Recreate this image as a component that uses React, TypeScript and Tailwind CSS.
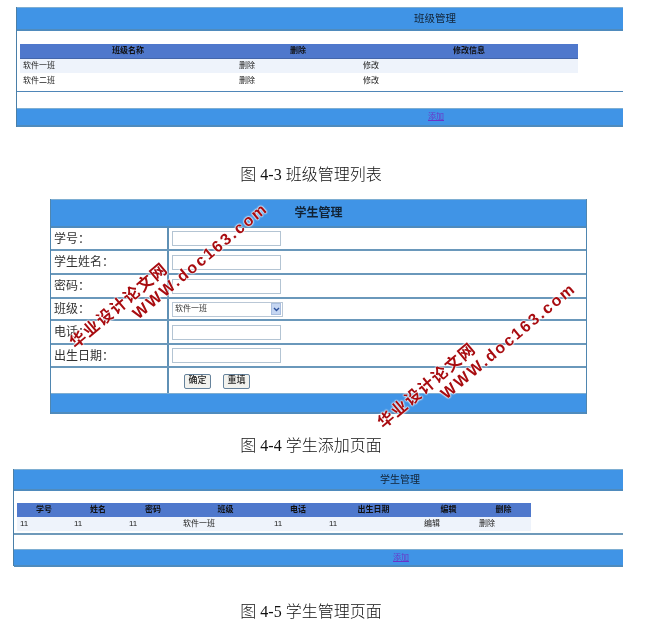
const cjk = "font-['Liberation_Sans','Noto_Sans_CJK_SC',sans-serif]";

function Caption({ children, className }: { children: React.ReactNode; className: string }) {
  return (
    <div className={`text-center text-[16px] leading-[20px] text-[#111] font-['Liberation_Serif','Noto_Sans_CJK_SC',serif] font-light ${className}`}>
      {children}
    </div>
  );
}

function Band({ className, children }: { className: string; children?: React.ReactNode }) {
  return (
    <div className={`flex items-center bg-[#4094e6] border-t border-t-[#7eaed2] border-b-2 border-b-[#4f8bbd] ${className}`}>
      {children}
    </div>
  );
}

function Mark({ cn, en, className }: { cn: string; en: string; className: string }) {
  return (
    <div className={`absolute origin-left -rotate-[40deg] flex flex-col items-start font-bold text-[#a80c10] font-['Liberation_Sans','Noto_Sans_CJK_SC',sans-serif] [text-shadow:0_0_2px_#fff,0_0_2px_#fff,0_0_2px_#fff] ${className}`}>
      <div className="text-[16px] leading-[18px] tracking-[1.5px] whitespace-nowrap">{cn}</div>
      <div className="text-[16px] leading-[18px] tracking-[2.1px] ml-[67px] whitespace-nowrap">{en}</div>
    </div>
  );
}

function FormRow({ label, h, last }: { label: string; h: string; last?: boolean }) {
  return (
    <div className={`flex ${h} ${last ? "" : "border-b-2 border-b-[#6a98bb]"}`}>
      <div className="w-[118px] shrink-0 border-r-2 border-r-[#5f90b5] pl-[3px] flex items-center text-[12px] text-[#333]">{label}</div>
      <div className="flex items-center pl-[3px]">
        {label === "班级：" ? (
          <div className="w-[111px] h-[15px] border border-[#b9c7d6] flex items-center justify-between pl-[2px] pr-[1px] text-[8px] text-[#333] bg-white">
            软件一班
            <span className="w-[10px] h-[12px] bg-[#c5d6f2] border border-[#a9bedf] flex items-center justify-center">
              <svg width="7" height="5" viewBox="0 0 7 5"><path d="M1 1l2.5 2.5L6 1" fill="none" stroke="#2a4f9a" strokeWidth="1.4" /></svg>
            </span>
          </div>
        ) : label !== "" ? (
          <div className="w-[109px] h-[15px] border border-[#b3c4d3] bg-white" />
        ) : (
          <div className="flex gap-[12px] pl-[12px] pt-[1px]">
            {["确定", "重填"].map((t) => (
              <div key={t} className="w-[27px] h-[15px] border border-[#66839c] rounded-[2px] bg-[#f2f2ee] text-[9px] font-medium text-[#222] flex items-center justify-center">{t}</div>
            ))}
          </div>
        )}
      </div>
    </div>
  );
}

export default function App() {
  return (
    <div className={`relative w-[647px] h-[634px] bg-white overflow-hidden blur-[0.3px] ${cjk}`}>
      {/* Table 1 */}
      <div className="pt-[7px] pl-[16px]">
        <div className="w-[607px] h-[120px] border-l border-l-[#4a7fa8] flex flex-col">
          <Band className="h-[24px] pl-[397px] text-[10.5px] text-[#123]">班级管理</Band>
          <div className="h-[61px] pt-[13px] pl-[3px] border-b border-b-[#4f86b8] shrink-0">
            <div className="w-[558px] text-[8px] text-[#222]">
              <div className="grid grid-cols-[216px_124px_1fr] h-[15px] items-center bg-[#4f78cc] font-bold text-[#111] text-center border-b border-b-[#46a]">
                <span>班级名称</span>
                <span>删除</span>
                <span>修改信息</span>
              </div>
              <div className="grid grid-cols-[216px_124px_1fr] h-[14px] items-center bg-[#eef3fb] pl-[3px]">
                <span>软件一班</span><span>删除</span><span>修改</span>
              </div>
              <div className="grid grid-cols-[216px_124px_1fr] h-[15px] items-center pl-[3px]">
                <span>软件二班</span><span>删除</span><span>修改</span>
              </div>
            </div>
          </div>
          <div className="h-[16px] shrink-0" />
          <Band className="h-[19px] pl-[411px] text-[8px]">
            <span className="underline text-[#6a35c8]">添加</span>
          </Band>
        </div>
      </div>

      <Caption className="w-[622px] mt-[38px]">图 4-3 班级管理列表</Caption>

      {/* Table 2 */}
      <div className="pl-[50px] mt-[14px]">
        <div className="w-[537px] h-[215px] border-x border-x-[#4f86b0] flex flex-col">
          <Band className="h-[29px] shrink-0 justify-center text-[12px] font-bold text-[#123]">学生管理</Band>
          <FormRow label="学号：" h="h-[23px]" />
          <FormRow label="学生姓名：" h="h-[24px]" />
          <FormRow label="密码：" h="h-[24px]" />
          <FormRow label="班级：" h="h-[22px]" />
          <FormRow label="电话：" h="h-[24px]" />
          <FormRow label="出生日期：" h="h-[23px]" />
          <FormRow label="" h="h-[25px]" last />
          <Band className="h-[21px] shrink-0" />
        </div>
      </div>

      <Caption className="w-[622px] mt-[22px]">图 4-4 学生添加页面</Caption>

      {/* Table 3 */}
      <div className="pl-[13px] mt-[13px]">
        <div className="w-[610px] h-[97px] border-l border-l-[#4a7fa8] flex flex-col">
          <Band className="h-[22px] shrink-0 pl-[366px] text-[10px] text-[#123]">学生管理</Band>
          <div className="h-[44px] shrink-0 pt-[12px] pl-[3px] border-b-2 border-b-[#6f9aba]">
            <div className="w-[514px] text-[8px] text-[#222]">
              <div className="grid grid-cols-[54px_54px_56px_89px_56px_95px_55px_1fr] h-[14px] items-center bg-[#4f78cc] font-bold text-[#111] text-center">
                <span>学号</span><span>姓名</span><span>密码</span><span>班级</span><span>电话</span><span>出生日期</span><span>编辑</span><span>删除</span>
              </div>
              <div className="grid grid-cols-[54px_55px_54px_91px_55px_95px_55px_1fr] h-[14px] items-center bg-[#eef3fb] pl-[3px]">
                <span>11</span><span>11</span><span>11</span><span>软件一班</span><span>11</span><span>11</span><span>编辑</span><span>删除</span>
              </div>
            </div>
          </div>
          <div className="h-[14px] shrink-0" />
          <Band className="h-[18px] shrink-0 pl-[379px] text-[8px]">
            <span className="underline text-[#6a35c8]">添加</span>
          </Band>
        </div>
      </div>

      <Caption className="w-[622px] mt-[36px]">图 4-5 学生管理页面</Caption>

      {/* Watermarks */}
      <Mark cn="华业设计论文网" en="WWW.doc163.com" className="left-[78px] top-[334px]" />
      <Mark cn="华业设计论文网" en="WWW.doc163.com" className="left-[386px] top-[414px]" />
    </div>
  );
}
